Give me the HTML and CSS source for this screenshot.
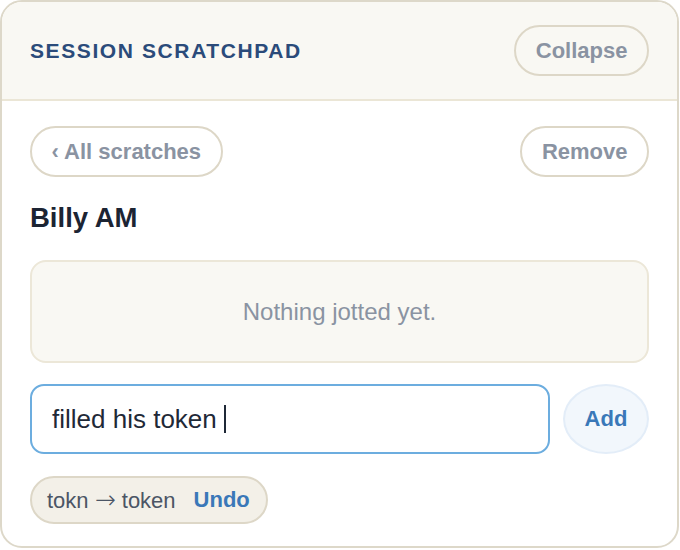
FILE: index.html
```html
<!DOCTYPE html>
<html lang="en">
<head>
<meta charset="utf-8">
<title>Session Scratchpad</title>
<link rel="stylesheet" href="styles.css">
</head>
<body>
<section class="card">
  <header class="card-head">
    <h2 class="title">SESSION SCRATCHPAD</h2>
    <button class="pill pill-clear" type="button">Collapse</button>
  </header>
  <div class="card-body">
    <div class="toolbar">
      <button class="pill" type="button">‹ All scratches</button>
      <button class="pill" type="button">Remove</button>
    </div>
    <h3 class="name">Billy AM</h3>
    <div class="empty">Nothing jotted yet.</div>
    <div class="entry">
      <div class="field" role="textbox" aria-label="New note"><span class="field-text">filled his token</span><span class="caret"></span></div>
      <button class="add" type="button">Add</button>
    </div>
    <div class="fix">
      <span class="fix-text">tokn <span class="arrow">→</span> token</span>
      <button class="undo" type="button">Undo</button>
    </div>
  </div>
</section>
</body>
</html>
```

FILE: styles.css
```css
* { box-sizing: border-box; }

body {
  margin: 0;
  background: #ffffff;
  font-family: "Liberation Sans", Arial, Helvetica, sans-serif;
}

.card {
  width: 679px;
  border: 2px solid #ddd8c9;
  border-radius: 22px;
  overflow: hidden;
  background: #ffffff;
}

.card-head {
  display: flex;
  justify-content: space-between;
  align-items: center;
  padding: 23px 28px;
  background: #f9f8f3;
  border-bottom: 2px solid #ebe6d6;
}

.title {
  margin: 0;
  font-size: 21px;
  line-height: 25px;
  font-weight: 700;
  letter-spacing: 1.6px;
  color: #2b4b7a;
}

.pill {
  height: 51px;
  padding: 0 19.5px;
  border: 2px solid #ddd7c7;
  border-radius: 999px;
  background: #ffffff;
  font-family: inherit;
  font-size: 22px;
  font-weight: 700;
  line-height: 25px;
  color: #8a93a2;
  cursor: pointer;
}

.pill-clear {
  background: transparent;
}

.card-body {
  padding: 25px 28px 22px;
}

.toolbar {
  display: flex;
  justify-content: space-between;
  align-items: center;
}

.name {
  margin: 25px 0 0;
  font-size: 27.5px;
  line-height: 32px;
  font-weight: 700;
  color: #1c2433;
}

.empty {
  margin-top: 26px;
  height: 103px;
  display: flex;
  align-items: center;
  justify-content: center;
  background: #f9f8f3;
  border: 2px solid #ece7d8;
  border-radius: 16px;
  font-size: 24px;
  color: #8a93a2;
}

.entry {
  margin-top: 21px;
  display: flex;
  gap: 13px;
}

.field {
  flex: 1;
  height: 70px;
  display: flex;
  align-items: center;
  padding: 0 20px;
  border: 2px solid #6caddf;
  border-radius: 14px;
  background: #ffffff;
  font-size: 26px;
  color: #1f2937;
}

.caret {
  display: inline-block;
  width: 2px;
  height: 28px;
  margin-left: 7px;
  background: #1f2937;
}

.add {
  width: 86px;
  height: 70px;
  border: 2px solid #e3edf8;
  border-radius: 50%;
  background: #f2f7fc;
  font-family: inherit;
  font-size: 22px;
  font-weight: 700;
  color: #3a78b8;
  cursor: pointer;
}

.fix {
  margin-top: 22px;
  display: inline-flex;
  align-items: center;
  gap: 18px;
  height: 48px;
  padding: 0 16px 0 15px;
  border: 2px solid #ddd7c7;
  border-radius: 999px;
  background: #f3f0e8;
  font-size: 22px;
  line-height: 25px;
  color: #4b5565;
}

.arrow {
  font-family: "DejaVu Sans", sans-serif;
  font-size: 25px;
  font-weight: 200;
  line-height: 25px;
}

.undo {
  padding: 0;
  border: 0;
  background: none;
  font-family: inherit;
  font-size: 22px;
  font-weight: 700;
  color: #3a78b8;
  cursor: pointer;
}
```
